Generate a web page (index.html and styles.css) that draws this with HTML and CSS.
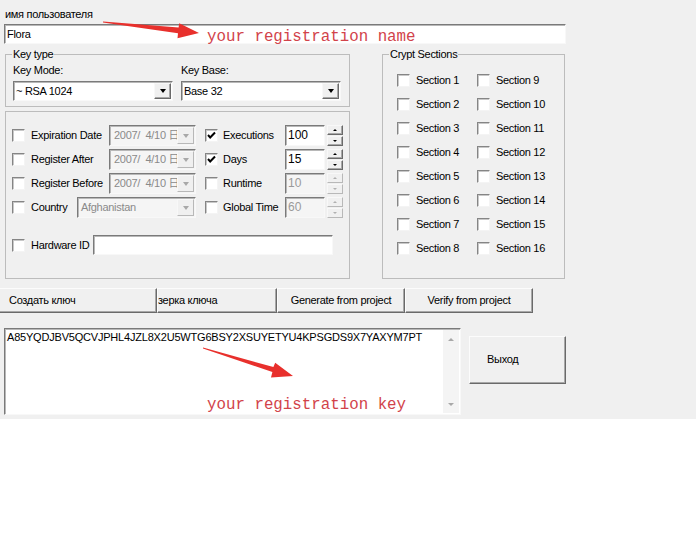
FILE: index.html
```html
<!DOCTYPE html>
<html lang="ru">
<head>
	<meta charset="UTF-8">
	<title>Keygen</title>
	<link rel="stylesheet" href="styles.css">
</head>
<body>
<div class="window">
	<div class="user-label">имя пользователя</div>
	<div class="edit user-edit">Flora</div>

	<div class="main">
		<div class="left">
			<fieldset class="group key-type">
				<legend>Key type</legend>
				<div class="key-cols">
					<div class="key-col">
						<div class="caption">Key Mode:</div>
						<div class="combo"><span class="combo-text">~ RSA 1024</span><span class="drop"><i class="tri"></i></span></div>
					</div>
					<div class="key-col">
						<div class="caption">Key Base:</div>
						<div class="combo"><span class="combo-text">Base 32</span><span class="drop"><i class="tri"></i></span></div>
					</div>
				</div>
			</fieldset>

			<fieldset class="group options">
				<div class="opt-row">
					<span class="cb"></span><span class="lbl w-date">Expiration Date</span>
					<div class="combo off date"><span class="combo-text">2007/&nbsp; 4/10 日</span><span class="drop"><i class="tri"></i></span></div>
					<span class="cb cb-right on"><svg width="9" height="9" viewBox="0 0 9 9"><polyline points="1,4 3.2,6.5 8,1.5" fill="none" stroke="#000" stroke-width="2"/></svg></span><span class="lbl2">Executions</span>
					<div class="edit spin-edit">100</div>
					<div class="spin"><span class="sbtn"><i class="up"></i></span><span class="sbtn"><i class="dn"></i></span></div>
				</div>
				<div class="opt-row">
					<span class="cb"></span><span class="lbl w-date">Register After</span>
					<div class="combo off date"><span class="combo-text">2007/&nbsp; 4/10 日</span><span class="drop"><i class="tri"></i></span></div>
					<span class="cb cb-right on"><svg width="9" height="9" viewBox="0 0 9 9"><polyline points="1,4 3.2,6.5 8,1.5" fill="none" stroke="#000" stroke-width="2"/></svg></span><span class="lbl2">Days</span>
					<div class="edit spin-edit">15</div>
					<div class="spin"><span class="sbtn"><i class="up"></i></span><span class="sbtn"><i class="dn"></i></span></div>
				</div>
				<div class="opt-row">
					<span class="cb"></span><span class="lbl w-date">Register Before</span>
					<div class="combo off date"><span class="combo-text">2007/&nbsp; 4/10 日</span><span class="drop"><i class="tri"></i></span></div>
					<span class="cb cb-right"></span><span class="lbl2">Runtime</span>
					<div class="edit spin-edit off">10</div>
					<div class="spin off"><span class="sbtn"><i class="up"></i></span><span class="sbtn"><i class="dn"></i></span></div>
				</div>
				<div class="opt-row">
					<span class="cb"></span><span class="lbl w-country">Country</span>
					<div class="combo off country"><span class="combo-text">Afghanistan</span><span class="drop"><i class="tri"></i></span></div>
					<span class="cb cb-right"></span><span class="lbl2">Global Time</span>
					<div class="edit spin-edit off">60</div>
					<div class="spin off"><span class="sbtn"><i class="up"></i></span><span class="sbtn"><i class="dn"></i></span></div>
				</div>
				<div class="opt-row hw-row">
					<span class="cb"></span><span class="lbl w-hw">Hardware ID</span>
					<div class="edit hw-edit"></div>
				</div>
			</fieldset>
		</div>

		<fieldset class="group crypt">
			<legend>Crypt Sections</legend>
			<div class="sections">
				<div class="sec"><span class="cb"></span><span>Section 1</span></div>
				<div class="sec"><span class="cb"></span><span>Section 2</span></div>
				<div class="sec"><span class="cb"></span><span>Section 3</span></div>
				<div class="sec"><span class="cb"></span><span>Section 4</span></div>
				<div class="sec"><span class="cb"></span><span>Section 5</span></div>
				<div class="sec"><span class="cb"></span><span>Section 6</span></div>
				<div class="sec"><span class="cb"></span><span>Section 7</span></div>
				<div class="sec"><span class="cb"></span><span>Section 8</span></div>
				<div class="sec"><span class="cb"></span><span>Section 9</span></div>
				<div class="sec"><span class="cb"></span><span>Section 10</span></div>
				<div class="sec"><span class="cb"></span><span>Section 11</span></div>
				<div class="sec"><span class="cb"></span><span>Section 12</span></div>
				<div class="sec"><span class="cb"></span><span>Section 13</span></div>
				<div class="sec"><span class="cb"></span><span>Section 14</span></div>
				<div class="sec"><span class="cb"></span><span>Section 15</span></div>
				<div class="sec"><span class="cb"></span><span>Section 16</span></div>
			</div>
		</fieldset>
	</div>

	<div class="btn-row">
		<div class="btn b-create">Создать ключ</div>
		<div class="btn b-check">зерка ключа</div>
		<div class="btn b-proj">Generate from project</div>
		<div class="btn b-proj">Verify from project</div>
	</div>

	<div class="bottom">
		<div class="memo">
			<div class="memo-text">A85YQDJBV5QCVJPHL4JZL8X2U5WTG6BSY2XSUYETYU4KPSGDS9X7YAXYM7PT</div>
			<div class="vscroll"><i class="up"></i><i class="dn"></i></div>
		</div>
		<div class="btn b-exit">Выход</div>
	</div>

	<!-- red notes drawn over the dialog -->
	<svg class="arrows" width="696" height="419" viewBox="0 0 696 419">
		<polygon points="103,21.5 178.6,27.6 179.2,23.2 199,33 177.5,38.2 178,33.2 103,22.5" fill="#e8302c"/>
		<polygon points="203,347.5 273.4,367 275.2,362.8 293,376 271,377.6 272.4,372 203,348.6" fill="#e8302c"/>
	</svg>
	<span class="note note-name">your registration name</span>
	<span class="note note-key">your registration key</span>
</div>
</body>
</html>
```

FILE: styles.css
```css
*{
	margin:0;
	padding:0;
	box-sizing:border-box;
}
body{
	background:#fff;
	font-family:"Liberation Sans", Arial, sans-serif;
	font-size:11px;
	letter-spacing:-0.3px;
	color:#000;
}
.window{
	position:relative;
	height:419px;
	background:#f0f0f0;
	padding-top:8px;
}
.user-label{
	margin-left:5px;
	line-height:13px;
	height:13px;
}
.edit{
	background:#fff;
	border:1px solid;
	border-color:#7a7a7a #f8f8f8 #f8f8f8 #7a7a7a;
	box-shadow:inset 1px 1px 0 #b8b8b8;
	padding-left:2px;
	white-space:nowrap;
	overflow:hidden;
}
.user-edit{
	margin:3px 0 0 4px;
	width:562px;
	height:20px;
	line-height:18px;
}
.main{
	display:flex;
	align-items:flex-start;
	margin-top:4px;
}
.left{
	margin-left:5px;
	width:345px;
}
fieldset.group{
	border:1px solid #bcbcbc;
	min-width:0;
}
legend{
	line-height:13px;
	padding:0 1px;
	margin-left:-1px;
}
.key-type{
	height:59px;
	padding:3px 7px 0 7px;
}
.key-cols{
	display:flex;
	gap:8px;
}
.key-col{
	width:160px;
}
.caption{
	line-height:13px;
	margin-bottom:4px;
}
.combo{
	display:flex;
	height:20px;
	background:#fff;
	border:1px solid;
	border-color:#7a7a7a #f8f8f8 #f8f8f8 #7a7a7a;
	box-shadow:inset 1px 1px 0 #b8b8b8;
}
.combo-text{
	flex:1;
	overflow:hidden;
	white-space:nowrap;
	line-height:18px;
	padding-left:2px;
}
.drop{
	display:flex;
	align-items:center;
	justify-content:center;
	width:17px;
	margin:1px 1px 1px 0;
	background:#f0f0f0;
	border:1px solid;
	border-color:#f8f8f8 #6a6a6a #6a6a6a #f8f8f8;
	box-shadow:inset -1px -1px 0 #a8a8a8;
}
.tri{
	display:block;
	width:0;
	height:0;
	border-left:3.5px solid transparent;
	border-right:3.5px solid transparent;
	border-top:4px solid #000;
}
.combo.off{
	background:#f5f5f5;
	color:#8a8a8a;
}
.combo.off .tri{
	border-top-color:#a8a8a8;
}
.combo.off .drop{
	border-color:#f8f8f8 #b8b8b8 #b8b8b8 #f8f8f8;
	box-shadow:none;
}
.options{
	height:168px;
	margin-top:4px;
	padding:13px 6px 0 6px;
}
.opt-row{
	display:flex;
	align-items:center;
	height:21px;
	margin-bottom:3px;
}
.cb{
	display:flex;
	align-items:center;
	justify-content:center;
	flex:none;
	width:13px;
	height:13px;
	background:#fff;
	border:1px solid;
	border-color:#858585 #f4f4f4 #f4f4f4 #858585;
	box-shadow:inset 1px 1px 0 #c8c8c8;
}
.lbl{
	margin-left:6px;
	line-height:13px;
	white-space:nowrap;
}
.w-date{width:78px;}
.w-country{width:46px;}
.w-hw{width:62px;}
.date{
	width:87px;
	height:21px;
}
.date .combo-text{
	padding-left:4px;
	font-family:"Liberation Sans", "Noto Sans CJK JP", sans-serif;
}
.country{
	width:119px;
	height:21px;
}
.country .combo-text{
	padding-left:3px;
}
.cb-right{
	margin-left:9px;
}
.lbl2{
	margin-left:5px;
	width:62px;
	line-height:13px;
	white-space:nowrap;
}
.spin-edit{
	width:40px;
	height:21px;
	line-height:19px;
	font-size:12px;
	letter-spacing:0;
}
.spin-edit.off{
	background:#f5f5f5;
	color:#9a9a9a;
}
.spin{
	display:flex;
	flex-direction:column;
	gap:1px;
	width:16px;
	height:21px;
	margin-left:2px;
}
.sbtn{
	flex:1;
	display:flex;
	align-items:center;
	justify-content:center;
	background:#f0f0f0;
	border:1px solid;
	border-color:#f8f8f8 #6a6a6a #6a6a6a #f8f8f8;
	box-shadow:inset -1px -1px 0 #a8a8a8;
}
.spin.off .sbtn{
	border-color:#f8f8f8 #b8b8b8 #b8b8b8 #f8f8f8;
	box-shadow:none;
}
.up, .dn{
	display:block;
	width:0;
	height:0;
	border-left:2px solid transparent;
	border-right:2px solid transparent;
}
.up{border-bottom:2px solid #000;}
.dn{border-top:2px solid #000;}
.spin.off .up{border-bottom-color:#b0b0b0;}
.spin.off .dn{border-top-color:#b0b0b0;}
.hw-row{
	margin-top:17px;
	height:20px;
}
.hw-edit{
	width:240px;
	height:20px;
}
.crypt{
	margin-left:32px;
	width:183px;
	height:231px;
	padding:7px 0 0 14px;
}
.crypt legend{
	margin-left:-8px;
}
.sections{
	display:grid;
	grid-template-columns:80px 80px;
	grid-template-rows:repeat(8, 24px);
	grid-auto-flow:column;
}
.sec{
	display:flex;
	align-items:center;
	gap:6px;
	white-space:nowrap;
}
.btn-row{
	display:flex;
	margin-top:9px;
}
.btn{
	height:25px;
	line-height:22px;
	background:#f0f0f0;
	border:1px solid;
	border-color:#fcfcfc #6a6a6a #6a6a6a #fcfcfc;
	box-shadow:inset -1px -1px 0 #a8a8a8;
	white-space:nowrap;
	overflow:hidden;
}
.b-create{
	width:157px;
	padding-left:9px;
	border-left:none;
}
.b-check{
	width:120px;
}
.b-proj{
	width:128px;
	text-align:center;
}
.bottom{
	display:flex;
	align-items:flex-start;
	margin-top:15px;
}
.memo{
	display:flex;
	margin-left:4px;
	width:457px;
	height:87px;
	background:#fff;
	border:1px solid;
	border-color:#7a7a7a #f8f8f8 #f8f8f8 #7a7a7a;
	box-shadow:inset 1px 1px 0 #b8b8b8;
}
.memo-text{
	flex:1;
	padding:2px 0 0 2px;
	line-height:13px;
	white-space:nowrap;
	overflow:hidden;
	letter-spacing:-0.2px;
}
.vscroll{
	display:flex;
	flex-direction:column;
	justify-content:space-between;
	align-items:center;
	width:16px;
	margin:1px 1px 1px 0;
	padding:8px 0 7px;
	background:#f4f4f4;
}
.vscroll .up{
	border-left-width:3px;
	border-right-width:3px;
	border-bottom:3px solid #a8a8a8;
}
.vscroll .dn{
	border-left-width:3px;
	border-right-width:3px;
	border-top:3px solid #a8a8a8;
}
.b-exit{
	width:97px;
	height:48px;
	line-height:45px;
	margin:8px 0 0 8px;
	padding-left:17px;
}
.arrows{
	position:absolute;
	left:0;
	top:0;
	pointer-events:none;
}
.note{
	position:absolute;
	left:207px;
	font-family:"Liberation Mono", "Courier New", monospace;
	font-size:15.8px;
	line-height:18px;
	letter-spacing:0;
	color:#d2434a;
	white-space:nowrap;
}
.note-name{top:28px;}
.note-key{top:396px;}
```
